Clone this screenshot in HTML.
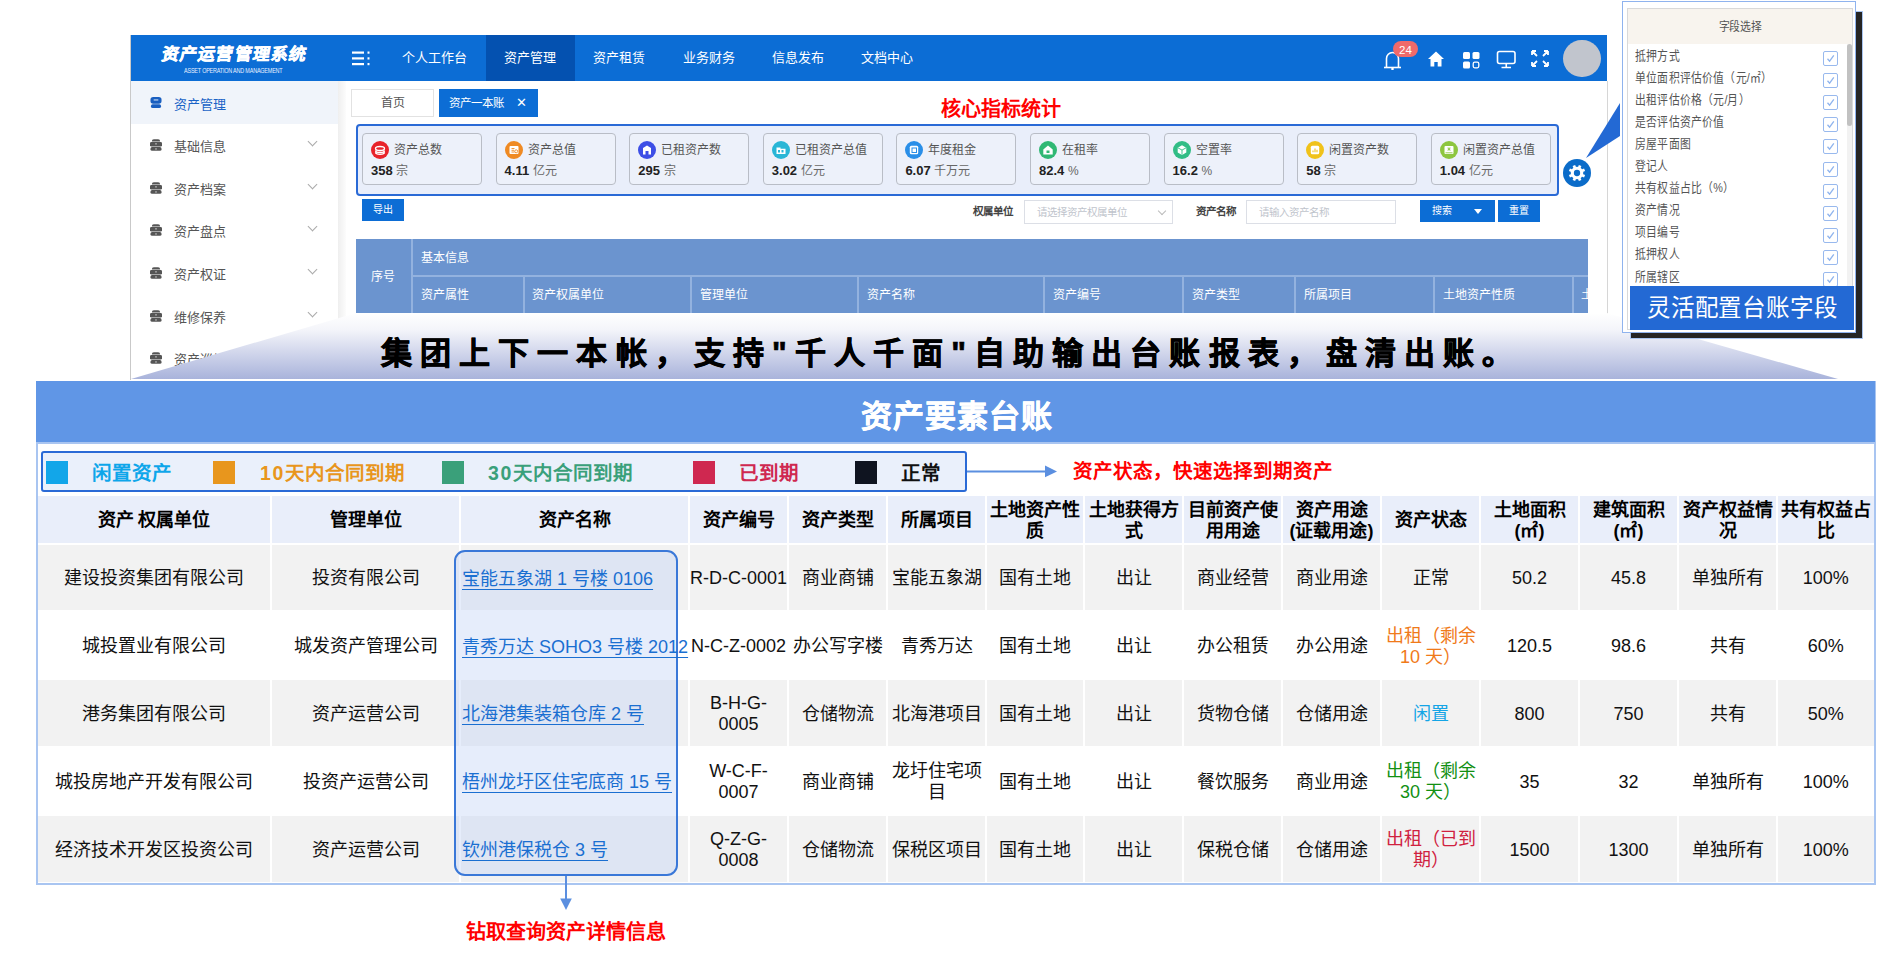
<!DOCTYPE html>
<html lang="zh-CN">
<head>
<meta charset="utf-8">
<style>
*{box-sizing:border-box;margin:0;padding:0}
html,body{width:1894px;height:954px;overflow:hidden;background:#fff}
body{position:relative;font-family:"Liberation Sans",sans-serif;color:#000}
.a{position:absolute}
.nw{white-space:nowrap}
/* app */
#hdr{left:131px;top:35px;width:1476px;height:46px;background:#0c6dd5}
.nav{top:35px;height:46px;line-height:46px;font-size:13px;color:#fff;white-space:nowrap}
.side{left:131px;width:207px;height:43px;font-size:13px;color:#555}
.side .ic{position:absolute;left:19px;top:16px;width:12px;height:12px}
.side .tx{position:absolute;left:43px;top:0;line-height:43px}
.side .chev{position:absolute;left:178px;top:13px;width:7px;height:7px;border-right:1px solid #aaa;border-bottom:1px solid #aaa;transform:rotate(45deg)}
.card{width:120px;height:52px;border:1px solid #b9bdc6;border-radius:4px;background:#edf1fa}
.card .ci{position:absolute;left:8px;top:7px;width:18px;height:18px;border-radius:50%}
.card .cl{position:absolute;left:31px;top:7px;line-height:18px;font-size:12px;color:#555;white-space:nowrap}
.card .cv{position:absolute;left:8px;top:28px;line-height:18px;font-size:13px;color:#222;white-space:nowrap}
.card .cv b{font-weight:700}
.card .cv span{color:#666;font-size:12px}
.th2{top:276px;height:37px;line-height:37px;font-size:12px;color:#fff;background:#6b94cf;padding-left:11px;white-space:nowrap}
/* popup */
.pi{left:1635px;font-size:12.6px;color:#555;line-height:22px;height:22px;white-space:nowrap;transform:scaleX(0.86);transform-origin:0 50%}
.cb{left:1823px;width:15px;height:15px;border:1px solid #98b9ee;border-radius:2px}
/* big table */
.c{position:absolute;display:flex;white-space:nowrap;align-items:center;justify-content:center;text-align:center;font-size:18px;line-height:21px;color:#111;padding-top:3px}
.h{background:#e9eefa;font-weight:700;color:#000;line-height:21.5px;padding-top:3.5px}
.o{background:#f2f2f2}
.e{background:#fff}
.lk{color:#1a6fd1;text-decoration:underline;text-underline-offset:3px;justify-content:flex-start;padding-left:2px}
</style>
</head>
<body>
<!-- ============ APP SCREENSHOT ============ -->
<div class="a" style="left:130px;top:35px;width:1px;height:345px;background:#c9c9c9"></div>
<div class="a" style="left:1607px;top:81px;width:1px;height:240px;background:#d6d6d6"></div>
<div id="hdr" class="a"></div>
<div class="a nw" style="left:162px;top:45px;font-size:17px;line-height:20px;font-weight:700;color:#fff;letter-spacing:1.1px;-webkit-text-stroke:0.5px #fff;transform:skewX(-10deg)">资产运营管理系统</div>
<div class="a nw" style="left:184px;top:66.5px;font-size:6.3px;line-height:8px;color:#e8f0ff;letter-spacing:-0.2px;transform:scaleX(0.86);transform-origin:0 50%">ASSET OPERATION AND MANAGEMENT</div>
<div class="a" style="left:486px;top:35px;width:89px;height:46px;background:#0451b0"></div>
<svg class="a" style="left:352px;top:51px" width="19" height="15" viewBox="0 0 19 15"><g fill="#fff"><rect x="0" y="0.5" width="12" height="2.2"/><rect x="0" y="6.3" width="12" height="2.2"/><rect x="0" y="12" width="12" height="2.2"/><rect x="15.5" y="0.5" width="2" height="2.2"/><rect x="15.5" y="6.3" width="2" height="2.2"/><rect x="15.5" y="12" width="2" height="2.2"/></g></svg>
<div class="a nav" style="left:402px">个人工作台</div>
<div class="a nav" style="left:504px">资产管理</div>
<div class="a nav" style="left:593px">资产租赁</div>
<div class="a nav" style="left:682.5px">业务财务</div>
<div class="a nav" style="left:771.5px">信息发布</div>
<div class="a nav" style="left:861px">文档中心</div>
<svg class="a" style="left:1380px;top:40px" width="40" height="30" viewBox="0 0 40 30">
<path d="M4 27.5h17" stroke="#fff" stroke-width="1.6" fill="none"/>
<path d="M6.5 27.5v-9a6 6 0 0 1 12 0v9" stroke="#fff" stroke-width="1.6" fill="none"/>
<circle cx="12.5" cy="29" r="1.3" fill="#fff"/>
<rect x="13" y="1" width="25" height="16" rx="8" fill="#f06a6a"/>
<text x="25.5" y="13.5" font-size="11.5" fill="#fff" text-anchor="middle" font-family="Liberation Sans">24</text>
</svg>
<svg class="a" style="left:1427px;top:50px" width="18" height="18" viewBox="0 0 18 18"><path d="M9 1.5L1 9h2.5v7.5h3.8v-4.5h3.4v4.5h3.8V9H17z" fill="#fff"/></svg>
<svg class="a" style="left:1462px;top:51px" width="19" height="18" viewBox="0 0 19 18"><g fill="#fff"><rect x="1" y="1" width="7" height="7" rx="1.5"/><rect x="10.5" y="1" width="7" height="7" rx="1.5"/><rect x="1" y="10.5" width="7" height="7" rx="1.5"/><rect x="11.2" y="11.2" width="5.6" height="5.6" rx="1.5" fill="none" stroke="#fff" stroke-width="1.3"/></g></svg>
<svg class="a" style="left:1496px;top:50px" width="21" height="19" viewBox="0 0 21 19"><rect x="1.5" y="1.5" width="17.5" height="12" rx="2" fill="none" stroke="#fff" stroke-width="1.6"/><path d="M10.25 13.5v3.5M5.5 17.5h9.5" stroke="#fff" stroke-width="1.6"/></svg>
<svg class="a" style="left:1530px;top:49px" width="20" height="19" viewBox="0 0 20 19"><g stroke="#fff" stroke-width="1.8" fill="none"><path d="M2 2l5 5M2 2h4M2 2v4"/><path d="M18 2l-5 5M18 2h-4M18 2v4"/><path d="M2 17l5-5M2 17h4M2 17v-4"/><path d="M18 17l-5-5M18 17h-4M18 17v-4"/></g></svg>
<div class="a" style="left:1563px;top:39.5px;width:37.5px;height:37.5px;border-radius:50%;background:#c1c5cd"></div>
<div class="a" style="left:131px;top:81px;width:207px;height:300px;background:#fff"></div>
<div class="a" style="left:338px;top:81px;width:8px;height:240px;background:linear-gradient(to right,#efefef,#fcfcfc)"></div>
<div class="a" style="left:131px;top:81px;width:207px;height:43px;background:#f0f4fa"></div>
<div class="a side" style="top:82.5px;color:#1a63c6"><svg class="ic" viewBox="0 0 13 13" width="13" height="13" style="top:14.5px;left:19px"><rect x="0.5" y="0" width="12" height="7.2" rx="3" fill="#1a5fc0"/><rect x="1" y="7.8" width="11" height="4.2" rx="2" fill="#1a5fc0"/><rect x="4" y="2.6" width="5" height="1.2" fill="#fff" opacity="0.8"/></svg><div class="tx">资产管理</div></div>
<div class="a side" style="top:125.1px"><svg class="ic" viewBox="0 0 13 13" width="13" height="13" style="top:14px;left:18.5px"><path d="M2 2.6a2.2 2.2 0 0 1 2.2-2.2h4.6A2.2 2.2 0 0 1 11 2.6z" fill="#555"/><rect x="0" y="3.2" width="13" height="5" rx="1.5" fill="#555"/><rect x="0.5" y="8.8" width="12" height="4" rx="1.8" fill="#555"/><rect x="5.6" y="4.8" width="1.8" height="1" fill="#ddd"/><rect x="5.6" y="10.3" width="1.8" height="1" fill="#ddd"/></svg><div class="tx">基础信息</div><div class="chev"></div></div>
<div class="a side" style="top:167.7px"><svg class="ic" viewBox="0 0 13 13" width="13" height="13" style="top:14px;left:18.5px"><path d="M2 2.6a2.2 2.2 0 0 1 2.2-2.2h4.6A2.2 2.2 0 0 1 11 2.6z" fill="#555"/><rect x="0" y="3.2" width="13" height="5" rx="1.5" fill="#555"/><rect x="0.5" y="8.8" width="12" height="4" rx="1.8" fill="#555"/><rect x="5.6" y="4.8" width="1.8" height="1" fill="#ddd"/><rect x="5.6" y="10.3" width="1.8" height="1" fill="#ddd"/></svg><div class="tx">资产档案</div><div class="chev"></div></div>
<div class="a side" style="top:210.3px"><svg class="ic" viewBox="0 0 13 13" width="13" height="13" style="top:14px;left:18.5px"><path d="M2 2.6a2.2 2.2 0 0 1 2.2-2.2h4.6A2.2 2.2 0 0 1 11 2.6z" fill="#555"/><rect x="0" y="3.2" width="13" height="5" rx="1.5" fill="#555"/><rect x="0.5" y="8.8" width="12" height="4" rx="1.8" fill="#555"/><rect x="5.6" y="4.8" width="1.8" height="1" fill="#ddd"/><rect x="5.6" y="10.3" width="1.8" height="1" fill="#ddd"/></svg><div class="tx">资产盘点</div><div class="chev"></div></div>
<div class="a side" style="top:252.9px"><svg class="ic" viewBox="0 0 13 13" width="13" height="13" style="top:14px;left:18.5px"><path d="M2 2.6a2.2 2.2 0 0 1 2.2-2.2h4.6A2.2 2.2 0 0 1 11 2.6z" fill="#555"/><rect x="0" y="3.2" width="13" height="5" rx="1.5" fill="#555"/><rect x="0.5" y="8.8" width="12" height="4" rx="1.8" fill="#555"/><rect x="5.6" y="4.8" width="1.8" height="1" fill="#ddd"/><rect x="5.6" y="10.3" width="1.8" height="1" fill="#ddd"/></svg><div class="tx">资产权证</div><div class="chev"></div></div>
<div class="a side" style="top:295.5px"><svg class="ic" viewBox="0 0 13 13" width="13" height="13" style="top:14px;left:18.5px"><path d="M2 2.6a2.2 2.2 0 0 1 2.2-2.2h4.6A2.2 2.2 0 0 1 11 2.6z" fill="#555"/><rect x="0" y="3.2" width="13" height="5" rx="1.5" fill="#555"/><rect x="0.5" y="8.8" width="12" height="4" rx="1.8" fill="#555"/><rect x="5.6" y="4.8" width="1.8" height="1" fill="#ddd"/><rect x="5.6" y="10.3" width="1.8" height="1" fill="#ddd"/></svg><div class="tx">维修保养</div><div class="chev"></div></div>
<div class="a side" style="top:338.1px"><svg class="ic" viewBox="0 0 13 13" width="13" height="13" style="top:14px;left:18.5px"><path d="M2 2.6a2.2 2.2 0 0 1 2.2-2.2h4.6A2.2 2.2 0 0 1 11 2.6z" fill="#555"/><rect x="0" y="3.2" width="13" height="5" rx="1.5" fill="#555"/><rect x="0.5" y="8.8" width="12" height="4" rx="1.8" fill="#555"/><rect x="5.6" y="4.8" width="1.8" height="1" fill="#ddd"/><rect x="5.6" y="10.3" width="1.8" height="1" fill="#ddd"/></svg><div class="tx">资产巡检</div><div class="chev"></div></div>
<div class="a" style="left:351px;top:89px;width:83px;height:28px;border:1px solid #e2e2e2;background:#fff;font-size:12px;line-height:26px;text-align:center;color:#555">首页</div>
<div class="a nw" style="left:439px;top:89px;width:99px;height:28px;background:#0c6dd5;font-size:11.5px;line-height:28px;color:#fff;padding-left:10px">资产一本账<span style="position:absolute;left:77px;top:0;font-size:13px">✕</span></div>
<div class="a nw" style="left:940.5px;top:96.5px;font-size:20px;line-height:25px;font-weight:700;color:#ff0000">核心指标统计</div>
<div class="a" style="left:355.5px;top:124px;width:1203px;height:72px;border:2px solid #2a6ad6;border-radius:4px;background:#e9eefa"></div>
<div class="a card" style="left:362.0px;top:133px"><div class="ci" style="background:#e8232a"><svg width="18" height="18" viewBox="0 0 18 18" style="position:absolute;left:0;top:0"><path d="M4.5 7.5c0-1.2 2-2 4.5-2s4.5.8 4.5 2-2 2-4.5 2-4.5-.8-4.5-2z M4.5 9.5c0 1.2 2 2 4.5 2s4.5-.8 4.5-2 M4.5 11.3c0 1.2 2 2 4.5 2s4.5-.8 4.5-2" fill="none" stroke="#fff" stroke-width="1.3"/></svg></div><div class="cl">资产总数</div><div class="cv"><b>358</b> <span>宗</span></div></div>
<div class="a card" style="left:495.6px;top:133px"><div class="ci" style="background:#ef8a23"><svg width="18" height="18" viewBox="0 0 18 18" style="position:absolute;left:0;top:0"><rect x="4.5" y="5" width="9" height="8" rx="1" fill="#fff"/><path d="M6.5 7.5h3M6.5 9.3h2.5M6.5 11h3" stroke="#ef8a23" stroke-width="0.9"/><circle cx="11.2" cy="10.3" r="1.5" fill="none" stroke="#ef8a23" stroke-width="0.9"/></svg></div><div class="cl">资产总值</div><div class="cv"><b>4.11</b> <span>亿元</span></div></div>
<div class="a card" style="left:629.2px;top:133px"><div class="ci" style="background:#3d4fe6"><svg width="18" height="18" viewBox="0 0 18 18" style="position:absolute;left:0;top:0"><path d="M5 13.5V7l4-2.5 4 2.5v6.5h-2.5v-3.5h-3v3.5z" fill="#fff"/></svg></div><div class="cl">已租资产数</div><div class="cv"><b>295</b> <span>宗</span></div></div>
<div class="a card" style="left:762.8px;top:133px"><div class="ci" style="background:#29b6d6"><svg width="18" height="18" viewBox="0 0 18 18" style="position:absolute;left:0;top:0"><path d="M4.5 13V6.5h4v1.2h5V13z" fill="#fff"/><rect x="6" y="9" width="2" height="2.5" fill="#29b6d6"/><rect x="9.5" y="9" width="2" height="2.5" fill="#29b6d6"/></svg></div><div class="cl">已租资产总值</div><div class="cv"><b>3.02</b> <span>亿元</span></div></div>
<div class="a card" style="left:896.4px;top:133px"><div class="ci" style="background:#2a8fe8"><svg width="18" height="18" viewBox="0 0 18 18" style="position:absolute;left:0;top:0"><rect x="4.8" y="4.8" width="8.4" height="8.4" rx="1.5" fill="#fff"/><rect x="7" y="7" width="4.5" height="4.5" fill="none" stroke="#2a8fe8" stroke-width="1"/></svg></div><div class="cl">年度租金</div><div class="cv"><b>6.07</b> <span>千万元</span></div></div>
<div class="a card" style="left:1030.0px;top:133px"><div class="ci" style="background:#30b874"><svg width="18" height="18" viewBox="0 0 18 18" style="position:absolute;left:0;top:0"><path d="M9 4.5L4.3 8.5v5h9.4v-5z" fill="#fff"/><rect x="7.5" y="9.5" width="3" height="2.5" fill="#30b874"/></svg></div><div class="cl">在租率</div><div class="cv"><b>82.4</b> <span>%</span></div></div>
<div class="a card" style="left:1163.6px;top:133px"><div class="ci" style="background:#31bd86"><svg width="18" height="18" viewBox="0 0 18 18" style="position:absolute;left:0;top:0"><path d="M9 4.3l4.3 2.4v4.8L9 13.9 4.7 11.5V6.7z" fill="#fff"/><path d="M4.9 6.8L9 9.1l4.1-2.3M9 9.1v4.6" stroke="#31bd86" stroke-width="0.9" fill="none"/></svg></div><div class="cl">空置率</div><div class="cv"><b>16.2</b> <span>%</span></div></div>
<div class="a card" style="left:1297.2px;top:133px"><div class="ci" style="background:#f0c21a"><svg width="18" height="18" viewBox="0 0 18 18" style="position:absolute;left:0;top:0"><rect x="4.8" y="4.8" width="8.4" height="8.4" rx="1.5" fill="#fff"/><path d="M7 11.2V9.5M9 11.2V7.5M11 11.2V8.7" stroke="#f0c21a" stroke-width="1.1"/></svg></div><div class="cl">闲置资产数</div><div class="cv"><b>58</b> <span>宗</span></div></div>
<div class="a card" style="left:1430.8px;top:133px"><div class="ci" style="background:#8dc63f"><svg width="18" height="18" viewBox="0 0 18 18" style="position:absolute;left:0;top:0"><rect x="4.5" y="5" width="9" height="8" rx="1" fill="#fff"/><path d="M5.5 11.8h7" stroke="#8dc63f" stroke-width="0.9"/><path d="M9 6.3v3.5M7.5 7l3 2.2M10.5 7l-3 2.2" stroke="#8dc63f" stroke-width="0.9"/></svg></div><div class="cl">闲置资产总值</div><div class="cv"><b>1.04</b> <span>亿元</span></div></div>
<div class="a" style="left:362px;top:199px;width:42px;height:22px;background:#0c6dd5;color:#fff;font-size:10px;line-height:22px;text-align:center">导出</div>
<div class="a nw" style="left:973px;top:204px;font-size:10.5px;line-height:14px;font-weight:700;color:#444">权属单位</div>
<div class="a nw" style="left:1023.5px;top:199.5px;width:149px;height:24px;border:1px solid #dcdfe6;background:#fff;font-size:10.5px;line-height:22px;color:#c0c4cc;padding-left:12px">请选择资产权属单位<span style="position:absolute;left:134px;top:7px;width:6px;height:6px;border-right:1px solid #bbb;border-bottom:1px solid #bbb;transform:rotate(45deg)"></span></div>
<div class="a nw" style="left:1195.5px;top:204px;font-size:10.5px;line-height:14px;font-weight:700;color:#444">资产名称</div>
<div class="a nw" style="left:1246px;top:199.5px;width:150px;height:24px;border:1px solid #dcdfe6;background:#fff;font-size:10.5px;line-height:22px;color:#c0c4cc;padding-left:12px">请输入资产名称</div>
<div class="a nw" style="left:1420px;top:200px;width:75px;height:22px;background:#0c6dd5;font-size:10px;line-height:22px;color:#fff;padding-left:12px">搜索<span style="position:absolute;left:54px;top:9px;border-left:4px solid transparent;border-right:4px solid transparent;border-top:5px solid #fff"></span></div>
<div class="a nw" style="left:1497.5px;top:200px;width:42px;height:22px;background:#0c6dd5;font-size:10px;line-height:22px;color:#fff;text-align:center">重置</div>
<div class="a" style="left:356px;top:239px;width:1232px;height:74px;background:#6b94cf"></div>
<div class="a" style="left:411px;top:275px;width:1177px;height:1.5px;background:#93b2df"></div>
<div class="a" style="left:411px;top:239px;width:1.5px;height:74px;background:#93b2df"></div>
<div class="a" style="left:523px;top:276px;width:1.5px;height:37px;background:#93b2df"></div>
<div class="a" style="left:690px;top:276px;width:1.5px;height:37px;background:#93b2df"></div>
<div class="a" style="left:857px;top:276px;width:1.5px;height:37px;background:#93b2df"></div>
<div class="a" style="left:1043px;top:276px;width:1.5px;height:37px;background:#93b2df"></div>
<div class="a" style="left:1182px;top:276px;width:1.5px;height:37px;background:#93b2df"></div>
<div class="a" style="left:1294px;top:276px;width:1.5px;height:37px;background:#93b2df"></div>
<div class="a" style="left:1433px;top:276px;width:1.5px;height:37px;background:#93b2df"></div>
<div class="a" style="left:1572px;top:276px;width:1.5px;height:37px;background:#93b2df"></div>
<div class="a nw" style="left:371px;top:268px;font-size:12px;line-height:18px;color:#fff">序号</div>
<div class="a nw" style="left:421px;top:249px;font-size:12px;line-height:18px;color:#fff">基本信息</div>
<div class="a nw" style="left:421px;top:286px;font-size:12px;line-height:18px;color:#fff">资产属性</div>
<div class="a nw" style="left:532px;top:286px;font-size:12px;line-height:18px;color:#fff">资产权属单位</div>
<div class="a nw" style="left:700px;top:286px;font-size:12px;line-height:18px;color:#fff">管理单位</div>
<div class="a nw" style="left:867px;top:286px;font-size:12px;line-height:18px;color:#fff">资产名称</div>
<div class="a nw" style="left:1053px;top:286px;font-size:12px;line-height:18px;color:#fff">资产编号</div>
<div class="a nw" style="left:1192px;top:286px;font-size:12px;line-height:18px;color:#fff">资产类型</div>
<div class="a nw" style="left:1303.5px;top:286px;font-size:12px;line-height:18px;color:#fff">所属项目</div>
<div class="a nw" style="left:1443px;top:286px;font-size:12px;line-height:18px;color:#fff">土地资产性质</div>
<div class="a nw" style="left:1581px;top:286px;font-size:12px;line-height:18px;color:#fff">土</div>
<svg class="a" style="left:0;top:300px" width="1894" height="82" viewBox="0 300 1894 82">
<defs><linearGradient id="bg1" x1="0" y1="0" x2="0" y2="1"><stop offset="0" stop-color="#ffffff"/><stop offset="0.25" stop-color="#f4f5fa"/><stop offset="1" stop-color="#a9b3db"/></linearGradient></defs>
<polygon points="131,379 356,313 1607,313 1838,379" fill="url(#bg1)"/>
</svg>
<div class="a nw" style="left:381px;top:336px;font-size:31px;line-height:36px;font-weight:700;letter-spacing:8.1px;color:#000;-webkit-text-stroke:0.7px #000">集团上下一本帐，支持"千人千面"自助输出台账报表，盘清出账。</div>
<div class="a" style="left:36px;top:381px;width:1840px;height:504px;border:2px solid #a9c5f1;border-top:none;background:#fff"></div>
<div class="a" style="left:36px;top:381px;width:1839px;height:61px;background:#6096e6"></div>
<div class="a" style="left:38px;top:442px;width:1836px;height:2px;background:#a9c5f1"></div>
<div class="a nw" style="left:861px;top:395.5px;font-size:31px;line-height:42px;font-weight:700;color:#fff;letter-spacing:1.1px;-webkit-text-stroke:0.4px #fff">资产要素台账</div>
<div class="a" style="left:41px;top:451px;width:926px;height:41px;border:2px solid #2a6ad6;border-radius:3px;background:#eaf0fb"></div>
<div class="a" style="left:46px;top:461px;width:22px;height:23px;background:#12a6e9"></div>
<div class="a nw" style="left:92px;top:461px;font-size:19.5px;line-height:24px;font-weight:700;color:#0ea6ea">闲置资产</div>
<div class="a" style="left:213px;top:461px;width:22px;height:23px;background:#e8961d"></div>
<div class="a nw" style="left:260px;top:461px;font-size:19.5px;line-height:24px;font-weight:700;color:#e8961d"><span style="letter-spacing:1.6px">10</span>天内合同到期</div>
<div class="a" style="left:442px;top:461px;width:22px;height:23px;background:#3aa07a"></div>
<div class="a nw" style="left:488px;top:461px;font-size:19.5px;line-height:24px;font-weight:700;color:#3aa07a"><span style="letter-spacing:1.6px">30</span>天内合同到期</div>
<div class="a" style="left:692.5px;top:461px;width:22px;height:23px;background:#cf2850"></div>
<div class="a nw" style="left:738.5px;top:461px;font-size:19.5px;line-height:24px;font-weight:700;color:#cf2850">已到期</div>
<div class="a" style="left:854.5px;top:461px;width:22px;height:23px;background:#0f1420"></div>
<div class="a nw" style="left:900.5px;top:461px;font-size:19.5px;line-height:24px;font-weight:700;color:#111">正常</div>
<svg class="a" style="left:966px;top:464px" width="94" height="15" viewBox="0 0 94 15"><path d="M1 7.4h82" stroke="#5b8fe0" stroke-width="2"/><path d="M79 1.5L91 7.4L79 13.3z" fill="#5b8fe0"/></svg>
<div class="a nw" style="left:1073px;top:459px;font-size:19.5px;line-height:25px;font-weight:700;color:#ff0000">资产状态，快速选择到期资产</div>
<div class="c h" style="left:38px;top:496px;width:232px;height:46.5px">资产<span style="margin-left:4px"></span>权属单位</div>
<div class="c h" style="left:272px;top:496px;width:187px;height:46.5px">管理单位</div>
<div class="c h" style="left:461px;top:496px;width:227px;height:46.5px">资产名称</div>
<div class="c h" style="left:690px;top:496px;width:97px;height:46.5px">资产编号</div>
<div class="c h" style="left:789px;top:496px;width:97px;height:46.5px">资产类型</div>
<div class="c h" style="left:888px;top:496px;width:97px;height:46.5px">所属项目</div>
<div class="c h" style="left:987px;top:496px;width:96px;height:46.5px">土地资产性<br>质</div>
<div class="c h" style="left:1085px;top:496px;width:97px;height:46.5px">土地获得方<br>式</div>
<div class="c h" style="left:1184px;top:496px;width:97px;height:46.5px">目前资产使<br>用用途</div>
<div class="c h" style="left:1283px;top:496px;width:97px;height:46.5px">资产用途<br>(证载用途)</div>
<div class="c h" style="left:1382px;top:496px;width:97px;height:46.5px">资产状态</div>
<div class="c h" style="left:1481px;top:496px;width:97px;height:46.5px">土地面积<br>(㎡)</div>
<div class="c h" style="left:1580px;top:496px;width:97px;height:46.5px">建筑面积<br>(㎡)</div>
<div class="c h" style="left:1679px;top:496px;width:97px;height:46.5px">资产权益情<br>况</div>
<div class="c h" style="left:1778px;top:496px;width:95.5px;height:46.5px">共有权益占<br>比</div>
<div class="c o" style="left:38px;top:544.5px;width:232px;height:65.5px">建设投资集团有限公司</div>
<div class="c o" style="left:272px;top:544.5px;width:187px;height:65.5px">投资有限公司</div>
<div class="c o" style="left:461px;top:544.5px;width:227px;height:65.5px"></div>
<div class="c o" style="left:690px;top:544.5px;width:97px;height:65.5px">R-D-C-0001</div>
<div class="c o" style="left:789px;top:544.5px;width:97px;height:65.5px">商业商铺</div>
<div class="c o" style="left:888px;top:544.5px;width:97px;height:65.5px">宝能五象湖</div>
<div class="c o" style="left:987px;top:544.5px;width:96px;height:65.5px">国有土地</div>
<div class="c o" style="left:1085px;top:544.5px;width:97px;height:65.5px">出让</div>
<div class="c o" style="left:1184px;top:544.5px;width:97px;height:65.5px">商业经营</div>
<div class="c o" style="left:1283px;top:544.5px;width:97px;height:65.5px">商业用途</div>
<div class="c o" style="left:1382px;top:544.5px;width:97px;height:65.5px">正常</div>
<div class="c o" style="left:1481px;top:544.5px;width:97px;height:65.5px">50.2</div>
<div class="c o" style="left:1580px;top:544.5px;width:97px;height:65.5px">45.8</div>
<div class="c o" style="left:1679px;top:544.5px;width:97px;height:65.5px">单独所有</div>
<div class="c o" style="left:1778px;top:544.5px;width:95.5px;height:65.5px">100%</div>
<div class="c e" style="left:38px;top:612px;width:232px;height:66px">城投置业有限公司</div>
<div class="c e" style="left:272px;top:612px;width:187px;height:66px">城发资产管理公司</div>
<div class="c e" style="left:461px;top:612px;width:227px;height:66px"></div>
<div class="c e" style="left:690px;top:612px;width:97px;height:66px">N-C-Z-0002</div>
<div class="c e" style="left:789px;top:612px;width:97px;height:66px">办公写字楼</div>
<div class="c e" style="left:888px;top:612px;width:97px;height:66px">青秀万达</div>
<div class="c e" style="left:987px;top:612px;width:96px;height:66px">国有土地</div>
<div class="c e" style="left:1085px;top:612px;width:97px;height:66px">出让</div>
<div class="c e" style="left:1184px;top:612px;width:97px;height:66px">办公租赁</div>
<div class="c e" style="left:1283px;top:612px;width:97px;height:66px">办公用途</div>
<div class="c e" style="left:1382px;top:612px;width:97px;height:66px"><span style="color:#f07a1a">出租（剩余<br>10 天）</span></div>
<div class="c e" style="left:1481px;top:612px;width:97px;height:66px">120.5</div>
<div class="c e" style="left:1580px;top:612px;width:97px;height:66px">98.6</div>
<div class="c e" style="left:1679px;top:612px;width:97px;height:66px">共有</div>
<div class="c e" style="left:1778px;top:612px;width:95.5px;height:66px">60%</div>
<div class="c o" style="left:38px;top:680px;width:232px;height:65.5px">港务集团有限公司</div>
<div class="c o" style="left:272px;top:680px;width:187px;height:65.5px">资产运营公司</div>
<div class="c o" style="left:461px;top:680px;width:227px;height:65.5px"></div>
<div class="c o" style="left:690px;top:680px;width:97px;height:65.5px">B-H-G-<br>0005</div>
<div class="c o" style="left:789px;top:680px;width:97px;height:65.5px">仓储物流</div>
<div class="c o" style="left:888px;top:680px;width:97px;height:65.5px">北海港项目</div>
<div class="c o" style="left:987px;top:680px;width:96px;height:65.5px">国有土地</div>
<div class="c o" style="left:1085px;top:680px;width:97px;height:65.5px">出让</div>
<div class="c o" style="left:1184px;top:680px;width:97px;height:65.5px">货物仓储</div>
<div class="c o" style="left:1283px;top:680px;width:97px;height:65.5px">仓储用途</div>
<div class="c o" style="left:1382px;top:680px;width:97px;height:65.5px"><span style="color:#14a5e6">闲置</span></div>
<div class="c o" style="left:1481px;top:680px;width:97px;height:65.5px">800</div>
<div class="c o" style="left:1580px;top:680px;width:97px;height:65.5px">750</div>
<div class="c o" style="left:1679px;top:680px;width:97px;height:65.5px">共有</div>
<div class="c o" style="left:1778px;top:680px;width:95.5px;height:65.5px">50%</div>
<div class="c e" style="left:38px;top:747.5px;width:232px;height:66.0px">城投房地产开发有限公司</div>
<div class="c e" style="left:272px;top:747.5px;width:187px;height:66.0px">投资产运营公司</div>
<div class="c e" style="left:461px;top:747.5px;width:227px;height:66.0px"></div>
<div class="c e" style="left:690px;top:747.5px;width:97px;height:66.0px">W-C-F-<br>0007</div>
<div class="c e" style="left:789px;top:747.5px;width:97px;height:66.0px">商业商铺</div>
<div class="c e" style="left:888px;top:747.5px;width:97px;height:66.0px">龙圩住宅项<br>目</div>
<div class="c e" style="left:987px;top:747.5px;width:96px;height:66.0px">国有土地</div>
<div class="c e" style="left:1085px;top:747.5px;width:97px;height:66.0px">出让</div>
<div class="c e" style="left:1184px;top:747.5px;width:97px;height:66.0px">餐饮服务</div>
<div class="c e" style="left:1283px;top:747.5px;width:97px;height:66.0px">商业用途</div>
<div class="c e" style="left:1382px;top:747.5px;width:97px;height:66.0px"><span style="color:#129012">出租（剩余<br>30 天）</span></div>
<div class="c e" style="left:1481px;top:747.5px;width:97px;height:66.0px">35</div>
<div class="c e" style="left:1580px;top:747.5px;width:97px;height:66.0px">32</div>
<div class="c e" style="left:1679px;top:747.5px;width:97px;height:66.0px">单独所有</div>
<div class="c e" style="left:1778px;top:747.5px;width:95.5px;height:66.0px">100%</div>
<div class="c o" style="left:38px;top:815.5px;width:232px;height:66.0px">经济技术开发区投资公司</div>
<div class="c o" style="left:272px;top:815.5px;width:187px;height:66.0px">资产运营公司</div>
<div class="c o" style="left:461px;top:815.5px;width:227px;height:66.0px"></div>
<div class="c o" style="left:690px;top:815.5px;width:97px;height:66.0px">Q-Z-G-<br>0008</div>
<div class="c o" style="left:789px;top:815.5px;width:97px;height:66.0px">仓储物流</div>
<div class="c o" style="left:888px;top:815.5px;width:97px;height:66.0px">保税区项目</div>
<div class="c o" style="left:987px;top:815.5px;width:96px;height:66.0px">国有土地</div>
<div class="c o" style="left:1085px;top:815.5px;width:97px;height:66.0px">出让</div>
<div class="c o" style="left:1184px;top:815.5px;width:97px;height:66.0px">保税仓储</div>
<div class="c o" style="left:1283px;top:815.5px;width:97px;height:66.0px">仓储用途</div>
<div class="c o" style="left:1382px;top:815.5px;width:97px;height:66.0px"><span style="color:#d0213f">出租（已到<br>期）</span></div>
<div class="c o" style="left:1481px;top:815.5px;width:97px;height:66.0px">1500</div>
<div class="c o" style="left:1580px;top:815.5px;width:97px;height:66.0px">1300</div>
<div class="c o" style="left:1679px;top:815.5px;width:97px;height:66.0px">单独所有</div>
<div class="c o" style="left:1778px;top:815.5px;width:95.5px;height:66.0px">100%</div>
<div class="a" style="left:454px;top:550px;width:223.5px;height:326px;border:2px solid #3a78d8;border-radius:11px;background:rgba(196,212,245,0.42)"></div>
<div class="a nw" style="left:462px;top:566.75px;font-size:18px;line-height:24px;color:#1a6fd1;text-decoration:underline;text-underline-offset:4px">宝能五象湖 1 号楼 0106</div>
<div class="a nw" style="left:462px;top:634.5px;font-size:18px;line-height:24px;color:#1a6fd1;text-decoration:underline;text-underline-offset:4px">青秀万达 SOHO3 号楼 2012</div>
<div class="a nw" style="left:462px;top:702.25px;font-size:18px;line-height:24px;color:#1a6fd1;text-decoration:underline;text-underline-offset:4px">北海港集装箱仓库 2 号</div>
<div class="a nw" style="left:462px;top:770.0px;font-size:18px;line-height:24px;color:#1a6fd1;text-decoration:underline;text-underline-offset:4px">梧州龙圩区住宅底商 15 号</div>
<div class="a nw" style="left:462px;top:838.0px;font-size:18px;line-height:24px;color:#1a6fd1;text-decoration:underline;text-underline-offset:4px">钦州港保税仓 3 号</div>
<svg class="a" style="left:558.5px;top:876px" width="14" height="36" viewBox="0 0 14 36"><path d="M7 0v24" stroke="#5b8fe0" stroke-width="2"/><path d="M1.2 22.5L7 34L12.8 22.5z" fill="#5b8fe0"/></svg>
<div class="a nw" style="left:465.5px;top:920px;font-size:20px;line-height:25px;font-weight:700;color:#ff0000">钻取查询资产详情信息</div>
<svg class="a" style="left:1560px;top:95px" width="70" height="100" viewBox="1560 95 70 100"><polygon points="1620,103 1620,136 1586,158" fill="#2369d4"/></svg>
<div class="a" style="left:1563px;top:158.5px;width:28px;height:28px;border-radius:50%;background:#0b6cc9"></div>
<svg class="a" style="left:1566px;top:161.5px" width="22" height="22" viewBox="-11 -11 22 22"><circle r="4.7" fill="none" stroke="#fff" stroke-width="3.1"/><line x1="4.62" y1="1.91" x2="7.58" y2="3.14" stroke="#fff" stroke-width="2.7"/><line x1="1.91" y1="4.62" x2="3.14" y2="7.58" stroke="#fff" stroke-width="2.7"/><line x1="-1.91" y1="4.62" x2="-3.14" y2="7.58" stroke="#fff" stroke-width="2.7"/><line x1="-4.62" y1="1.91" x2="-7.58" y2="3.14" stroke="#fff" stroke-width="2.7"/><line x1="-4.62" y1="-1.91" x2="-7.58" y2="-3.14" stroke="#fff" stroke-width="2.7"/><line x1="-1.91" y1="-4.62" x2="-3.14" y2="-7.58" stroke="#fff" stroke-width="2.7"/><line x1="1.91" y1="-4.62" x2="3.14" y2="-7.58" stroke="#fff" stroke-width="2.7"/><line x1="4.62" y1="-1.91" x2="7.58" y2="-3.14" stroke="#fff" stroke-width="2.7"/></svg>
<div class="a" style="left:1630px;top:11px;width:233px;height:328px;background:#252525;border:1px solid #a9c5f1"></div>
<div class="a" style="left:1622px;top:1px;width:234px;height:332px;background:#fff;border:1px solid #8fb3ee"></div>
<div class="a" style="left:1626.5px;top:8px;width:226px;height:322px;border:1px solid #d9d9d9;background:#fff"></div>
<div class="a" style="left:1627.5px;top:9px;width:224px;height:35px;background:#f8f4ee;font-size:12.3px;line-height:37px;text-align:center;color:#555;padding-left:0px"><span style="display:inline-block;transform:scaleX(0.88)">字段选择</span></div>
<div class="a" style="left:1847px;top:44px;width:5px;height:244px;background:#f2f2f2"></div>
<div class="a" style="left:1847px;top:44px;width:5px;height:82px;border-radius:3px;background:#c1c1c1"></div>
<div class="a pi" style="top:44.5px">抵押方式</div>
<div class="a cb" style="top:51.0px"><svg width="13" height="13" viewBox="0 0 13 13" style="position:absolute;left:0;top:0"><path d="M3.5 6.8L5.6 9.2L9.8 3.3" stroke="#8fb4ee" stroke-width="1.3" fill="none"/></svg></div>
<div class="a pi" style="top:66.6px">单位面积评估价值（元/㎡）</div>
<div class="a cb" style="top:73.1px"><svg width="13" height="13" viewBox="0 0 13 13" style="position:absolute;left:0;top:0"><path d="M3.5 6.8L5.6 9.2L9.8 3.3" stroke="#8fb4ee" stroke-width="1.3" fill="none"/></svg></div>
<div class="a pi" style="top:88.7px">出租评估价格（元/月）</div>
<div class="a cb" style="top:95.2px"><svg width="13" height="13" viewBox="0 0 13 13" style="position:absolute;left:0;top:0"><path d="M3.5 6.8L5.6 9.2L9.8 3.3" stroke="#8fb4ee" stroke-width="1.3" fill="none"/></svg></div>
<div class="a pi" style="top:110.80000000000001px">是否评估资产价值</div>
<div class="a cb" style="top:117.30000000000001px"><svg width="13" height="13" viewBox="0 0 13 13" style="position:absolute;left:0;top:0"><path d="M3.5 6.8L5.6 9.2L9.8 3.3" stroke="#8fb4ee" stroke-width="1.3" fill="none"/></svg></div>
<div class="a pi" style="top:132.9px">房屋平面图</div>
<div class="a cb" style="top:139.4px"><svg width="13" height="13" viewBox="0 0 13 13" style="position:absolute;left:0;top:0"><path d="M3.5 6.8L5.6 9.2L9.8 3.3" stroke="#8fb4ee" stroke-width="1.3" fill="none"/></svg></div>
<div class="a pi" style="top:155.0px">登记人</div>
<div class="a cb" style="top:161.5px"><svg width="13" height="13" viewBox="0 0 13 13" style="position:absolute;left:0;top:0"><path d="M3.5 6.8L5.6 9.2L9.8 3.3" stroke="#8fb4ee" stroke-width="1.3" fill="none"/></svg></div>
<div class="a pi" style="top:177.10000000000002px">共有权益占比（%）</div>
<div class="a cb" style="top:183.60000000000002px"><svg width="13" height="13" viewBox="0 0 13 13" style="position:absolute;left:0;top:0"><path d="M3.5 6.8L5.6 9.2L9.8 3.3" stroke="#8fb4ee" stroke-width="1.3" fill="none"/></svg></div>
<div class="a pi" style="top:199.20000000000002px">资产情况</div>
<div class="a cb" style="top:205.70000000000002px"><svg width="13" height="13" viewBox="0 0 13 13" style="position:absolute;left:0;top:0"><path d="M3.5 6.8L5.6 9.2L9.8 3.3" stroke="#8fb4ee" stroke-width="1.3" fill="none"/></svg></div>
<div class="a pi" style="top:221.3px">项目编号</div>
<div class="a cb" style="top:227.8px"><svg width="13" height="13" viewBox="0 0 13 13" style="position:absolute;left:0;top:0"><path d="M3.5 6.8L5.6 9.2L9.8 3.3" stroke="#8fb4ee" stroke-width="1.3" fill="none"/></svg></div>
<div class="a pi" style="top:243.4px">抵押权人</div>
<div class="a cb" style="top:249.89999999999998px"><svg width="13" height="13" viewBox="0 0 13 13" style="position:absolute;left:0;top:0"><path d="M3.5 6.8L5.6 9.2L9.8 3.3" stroke="#8fb4ee" stroke-width="1.3" fill="none"/></svg></div>
<div class="a pi" style="top:265.5px">所属辖区</div>
<div class="a cb" style="top:272.0px"><svg width="13" height="13" viewBox="0 0 13 13" style="position:absolute;left:0;top:0"><path d="M3.5 6.8L5.6 9.2L9.8 3.3" stroke="#8fb4ee" stroke-width="1.3" fill="none"/></svg></div>
<div class="a nw" style="left:1630px;top:286px;width:224px;height:44px;background:#2369d4;font-size:23.5px;line-height:44px;color:#fff;padding-left:17px;letter-spacing:0.8px">灵活配置台账字段</div>
</body>
</html>
